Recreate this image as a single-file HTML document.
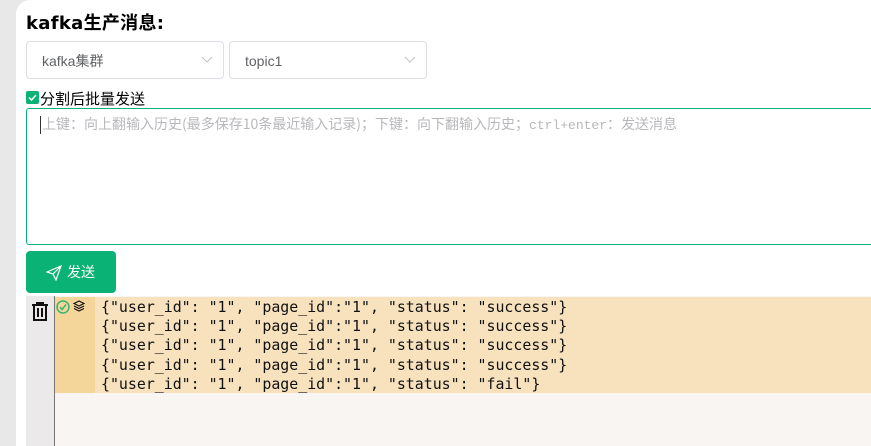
<!DOCTYPE html><html><head><meta charset="utf-8"><style>
body{margin:0;width:871px;height:446px;overflow:hidden;background:#e8e8e8;font-family:"Liberation Sans","Noto Sans CJK SC",sans-serif;position:relative}
.card{position:absolute;left:16px;top:0;width:900px;height:446px;background:#fff;border-radius:14px 0 0 0}
.abs{position:absolute}
.sel{position:absolute;top:41px;height:38px;border:1px solid #dcdfe6;border-radius:4px;box-sizing:border-box;font-size:14px;color:#606266;line-height:38px;padding-left:15px}
.sel svg{position:absolute;right:10px;top:14px}
</style></head><body>
<div class="card"></div>
<div class="abs" style="left:26px;top:9px;font-size:18px;font-weight:bold;color:#000;font-family:'DejaVu Sans','Noto Sans CJK SC',sans-serif;letter-spacing:0.3px">kafka生产消息:</div>
<div class="sel" style="left:26px;width:198px">kafka集群<svg width="12" height="8"><path d="M1 1L6 6L11 1" fill="none" stroke="#c0c4cc"/></svg></div>
<div class="sel" style="left:229px;width:198px">topic1<svg width="12" height="8"><path d="M1 1L6 6L11 1" fill="none" stroke="#c0c4cc"/></svg></div>
<div class="abs" style="left:26px;top:91px;width:13px;height:13px;background:#0bb276;border-radius:2px"><svg width="13" height="13"><path d="M3 6.5L5.5 9L10 4" fill="none" stroke="#fff" stroke-width="1.5"/></svg></div>
<div class="abs" style="left:40px;top:88px;font-size:15px;color:#000">分割后批量发送</div>
<div class="abs" style="left:26px;top:108px;width:860px;height:137px;border:1px solid #0bb276;border-radius:3px;box-sizing:border-box"></div>
<div class="abs" style="left:40px;top:116px;font-size:14px;color:#b8b8bc;border-left:1px solid #333;padding-left:1px;line-height:17px;font-family:'Noto Sans CJK SC',sans-serif;white-space:nowrap">上键：向上翻输入历史(最多保存10条最近输入记录)；下键：向下翻输入历史；<span style="font-family:'Liberation Mono',monospace;font-size:13px">ctrl+enter</span>：发送消息</div>
<div class="abs" style="left:26px;top:251px;width:90px;height:42px;background:#0bb276;border-radius:4px;color:#fff;font-size:14px;line-height:42px"><svg class="abs" style="left:20px;top:14px" width="16" height="16"><path d="M1 7L15 1L10 15L7 9Z M7 9L15 1" fill="none" stroke="#fff" stroke-width="1.2"/></svg><span style="position:absolute;left:41px">发送</span></div>
<div class="abs" style="left:26px;top:296px;width:860px;height:150px;background:#f9f5f3"></div>
<div class="abs" style="left:26px;top:296px;width:28px;height:150px;background:#ebe9ea;border-right:1px solid #777"></div>
<svg class="abs" style="left:31px;top:302px" width="18" height="19"><path d="M1 3H17M6 3V1H12V3M3 3V18H15V3M7 6V15M11 6V15" fill="none" stroke="#111" stroke-width="2"/></svg>
<div class="abs" style="left:55px;top:297px;width:40px;height:96px;background:#f5d69a"></div>
<svg class="abs" style="left:56px;top:300px" width="14" height="14"><circle cx="7" cy="7" r="6" fill="none" stroke="#3cb371" stroke-width="1.5"/><path d="M4 7L6 9.5L10 4.5" fill="none" stroke="#3cb371" stroke-width="1.5"/></svg>
<svg class="abs" style="left:73px;top:300px" width="12" height="12"><path d="M6 1L11 3.5L6 6L1 3.5Z M1 6L6 8.5L11 6 M1 8.5L6 11L11 8.5" fill="none" stroke="#111" stroke-width="1.2"/></svg>
<div class="abs" style="left:95px;top:297px;width:780px;height:96px;background:#f7e2bd"></div>
<div class="abs" style="left:101px;top:298px;font-family:'DejaVu Sans Mono','Liberation Mono',monospace;font-size:14.9px;line-height:19.2px;color:#111;white-space:pre">{"user_id": "1", "page_id":"1", "status": "success"}
{"user_id": "1", "page_id":"1", "status": "success"}
{"user_id": "1", "page_id":"1", "status": "success"}
{"user_id": "1", "page_id":"1", "status": "success"}
{"user_id": "1", "page_id":"1", "status": "fail"}</div>
</body></html>
